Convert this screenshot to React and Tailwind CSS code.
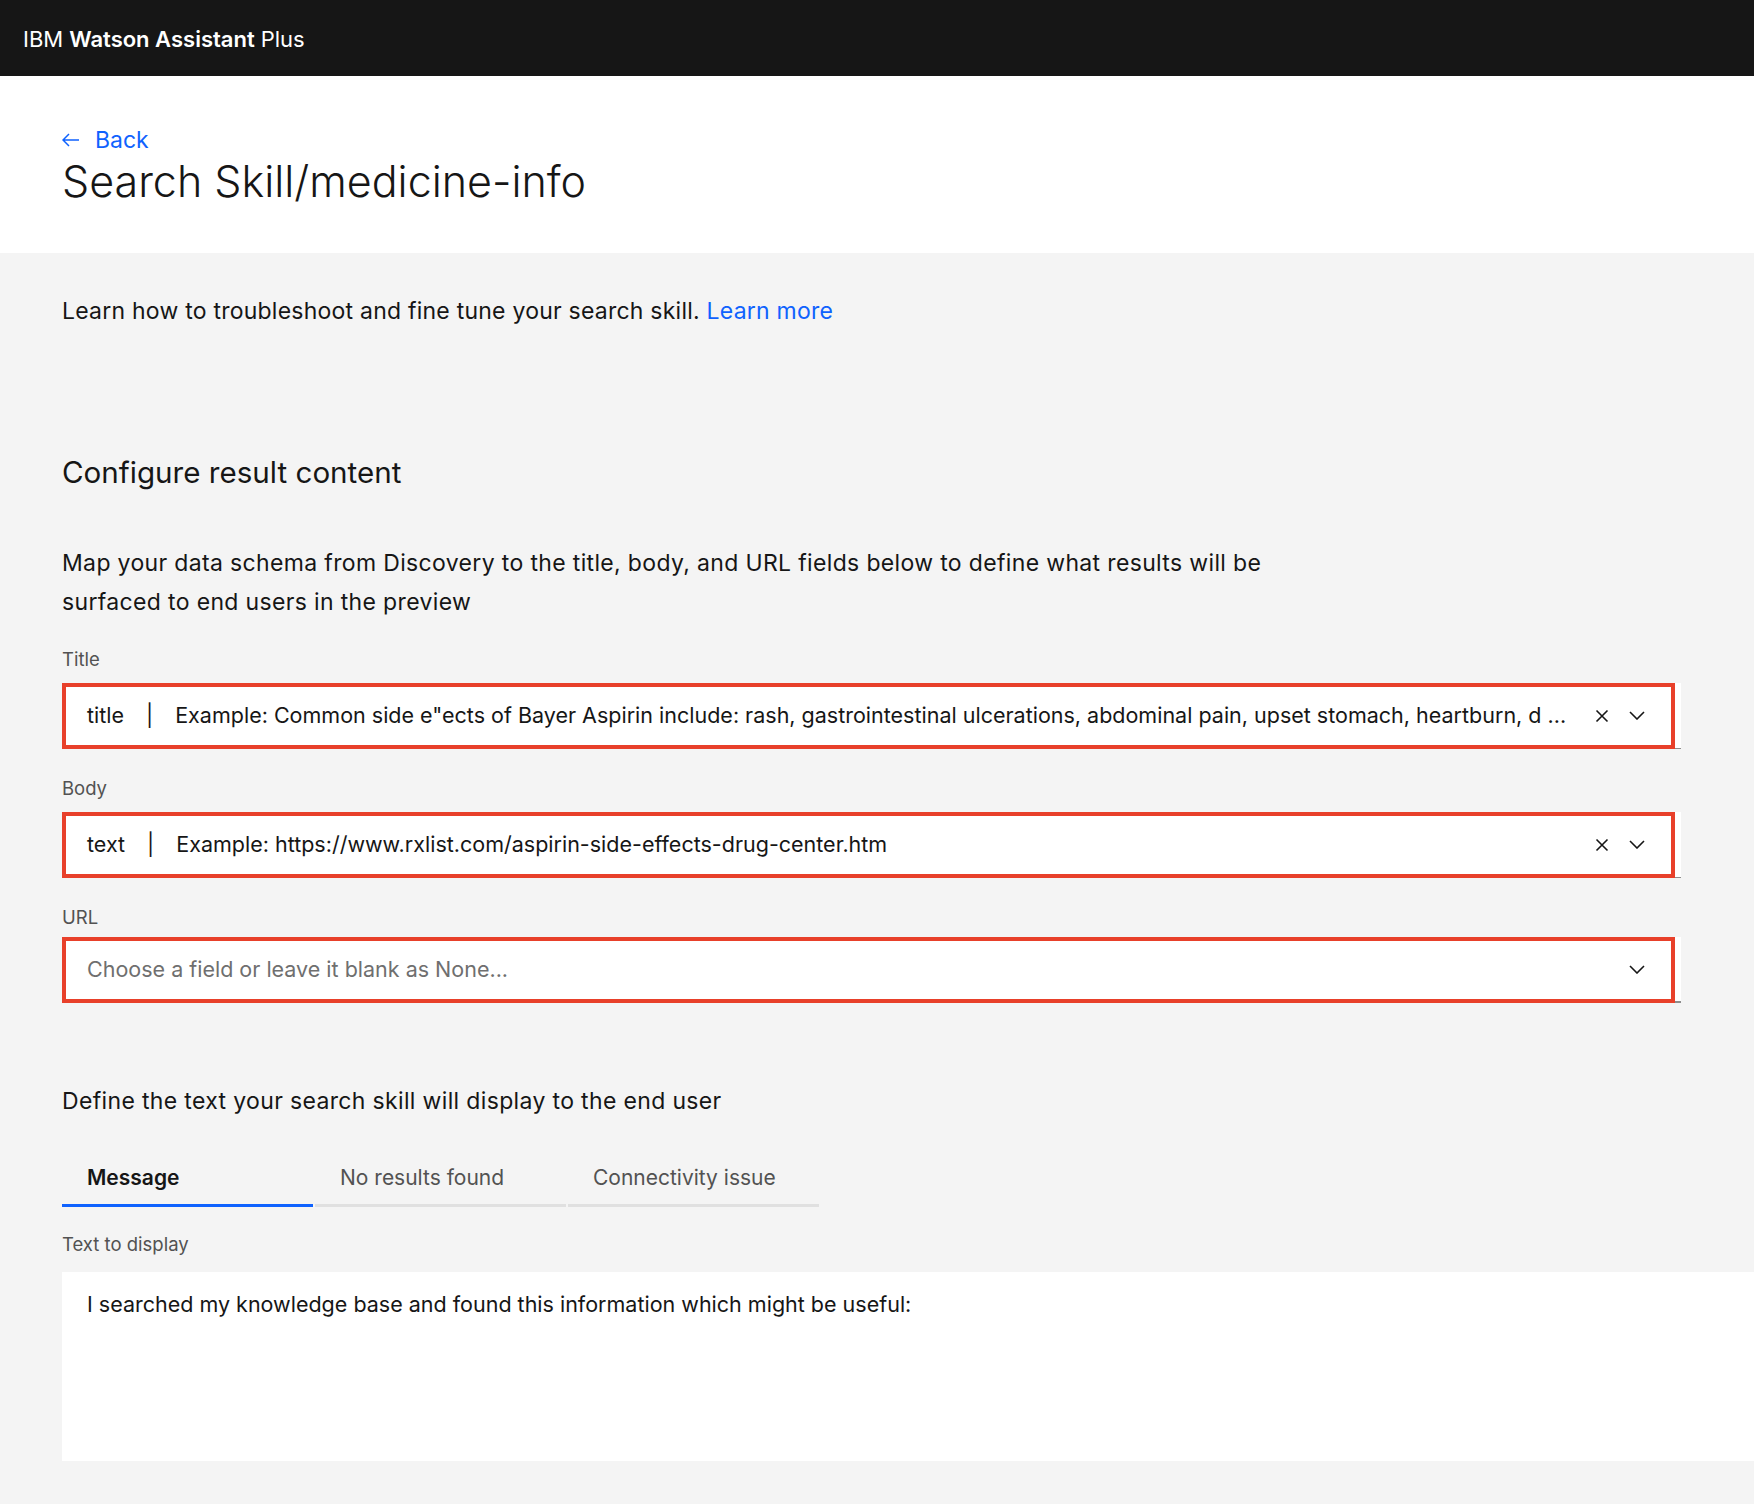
import React from 'react';

const font = { fontFamily: 'Inter, Roboto, "Liberation Sans", sans-serif' };

const CloseIcon = () => (
  <svg width="14" height="14" viewBox="0 0 14 14" fill="none" stroke="#161616" strokeWidth="1.6">
    <path d="M1.5 1.5 L12.5 12.5 M12.5 1.5 L1.5 12.5" />
  </svg>
);

const ChevronIcon = () => (
  <svg width="16" height="9" viewBox="0 0 16 9" fill="none" stroke="#161616" strokeWidth="1.6">
    <path d="M1 1 L8 8 L15 1" />
  </svg>
);

const Field = ({ label, value, example, placeholder, thick }) => (
  <div>
    <div className={`${thick ? 'mb-[9px]' : 'mb-[13px]'} text-[18.5px] leading-[22px] text-[#525252]`}>{label}</div>
    <div className="relative w-[1619px]">
      <div
        className={`flex h-[66px] items-center bg-white pl-[25px] pr-[36px] text-[21.5px] text-[#161616] ${
          thick ? 'border-b-2 border-[#8d8d8d]' : 'border-b border-[#8d8d8d]'
        }`}
      >
        {placeholder ? (
          <span className="flex-1 truncate text-[#6f6f6f]">{placeholder}</span>
        ) : (
          <>
            <span>{value}</span>
            <span className="mx-[22px]">|</span>
            <span className="flex-1 truncate">{example}</span>
            <span className="ml-[8px] mr-[20px] flex items-center">
              <CloseIcon />
            </span>
          </>
        )}
        <span className="flex items-center">
          <ChevronIcon />
        </span>
      </div>
      {/* annotation outline */}
      <div className="pointer-events-none absolute inset-y-0 left-0 right-[6px] border-4 border-[#e8402a]" />
    </div>
  </div>
);

export default function App() {
  const tabs = ['Message', 'No results found', 'Connectivity issue'];

  return (
    <div className="min-h-screen bg-[#f4f4f4]" style={font}>
      <header className="flex h-[76px] items-center bg-[#161616] px-[23px] pt-[2px] text-[22px] text-white">
        <span>IBM</span>
        <span className="ml-[6px] font-semibold">Watson Assistant</span>
        <span className="ml-[6px]">Plus</span>
      </header>

      <section className="h-[177px] bg-white pl-[62px] pt-[48px]">
        <a className="flex items-center text-[23px] leading-[32px] text-[#0f62fe]">
          <svg width="18" height="14" viewBox="0 0 18 14" fill="none" stroke="#0f62fe" strokeWidth="1.5">
            <path d="M1 7 H17 M7 1 L1 7 L7 13" />
          </svg>
          <span className="ml-[15px]">Back</span>
        </a>
        <h1 className="-mt-[1px] text-[43px] font-light leading-[52px] text-[#161616]">Search Skill/medicine-info</h1>
      </section>

      <main className="pl-[62px] text-[#161616]">
        <p className="pt-[42px] text-[23px] leading-[33px] tracking-[0.01em]">
          Learn how to troubleshoot and fine tune your search skill.{' '}
          <a className="text-[#0f62fe]">Learn more</a>
        </p>

        <h2 className="mt-[126px] text-[29.6px] leading-[36px]">Configure result content</h2>

        <p className="mt-[54px] text-[23px] leading-[39px] tracking-[0.015em]">
          Map your data schema from Discovery to the title, body, and URL fields below to define what results will be
          <br />
          surfaced to end users in the preview
        </p>

        <div className="mt-[26px] flex flex-col gap-[28px]">
          <Field
            label="Title"
            value="title"
            example='Example: Common side e"ects of Bayer Aspirin include: rash, gastrointestinal ulcerations, abdominal pain, upset stomach, heartburn, d ...'
          />
          <Field
            label="Body"
            value="text"
            example="Example: https://www.rxlist.com/aspirin-side-effects-drug-center.htm"
          />
          <Field label="URL" placeholder="Choose a field or leave it blank as None..." thick />
        </div>

        <h3 className="mt-[82px] text-[23px] leading-[33px] tracking-[0.015em]">
          Define the text your search skill will display to the end user
        </h3>

        <div className="mt-[29px] flex gap-[2px]">
          {tabs.map((tab, i) => (
            <div
              key={tab}
              className={`h-[60px] w-[251px] border-b-[3px] pl-[25px] pt-[17px] text-[21px] leading-[27px] ${
                i === 0 ? 'border-[#0f62fe] font-semibold text-[#161616]' : 'border-[#e0e0e0] text-[#525252]'
              }`}
            >
              {tab}
            </div>
          ))}
        </div>

        <div className="mt-[26px] text-[18.5px] leading-[22px] text-[#525252]">Text to display</div>
        <div className="mt-[17px] h-[189px] bg-white pl-[25px] pt-[16px] text-[21.5px] leading-[33px]">
          I searched my knowledge base and found this information which might be useful:
        </div>
      </main>
    </div>
  );
}
